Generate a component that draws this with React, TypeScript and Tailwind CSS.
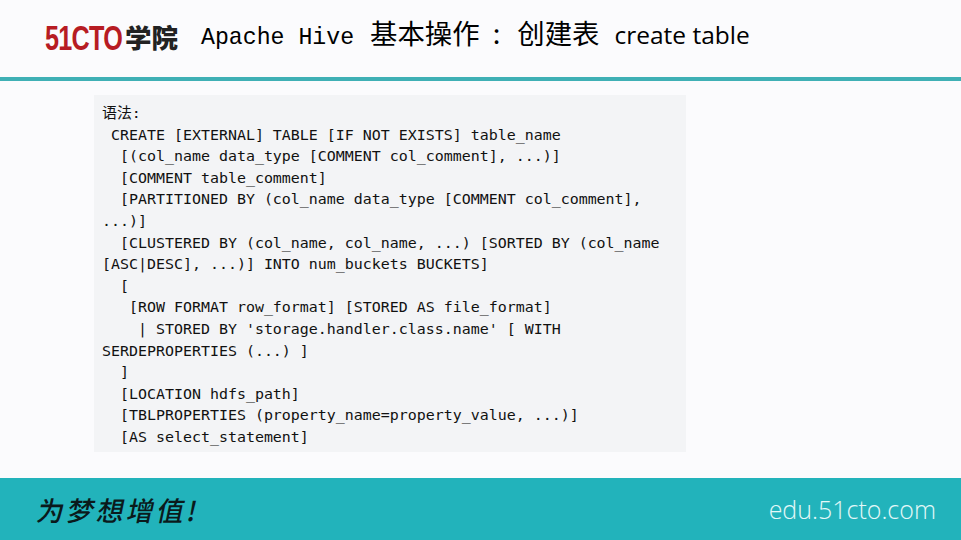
const SQL_LINES = [
  "语法:",
  " CREATE [EXTERNAL] TABLE [IF NOT EXISTS] table_name",
  "  [(col_name data_type [COMMENT col_comment], ...)]",
  "  [COMMENT table_comment]",
  "  [PARTITIONED BY (col_name data_type [COMMENT col_comment],",
  "...)]",
  "  [CLUSTERED BY (col_name, col_name, ...) [SORTED BY (col_name",
  "[ASC|DESC], ...)] INTO num_buckets BUCKETS]",
  "  [",
  "   [ROW FORMAT row_format] [STORED AS file_format]",
  "    | STORED BY 'storage.handler.class.name' [ WITH",
  "SERDEPROPERTIES (...) ]",
  "  ]",
  "  [LOCATION hdfs_path]",
  "  [TBLPROPERTIES (property_name=property_value, ...)]",
  "  [AS select_statement]",
];

export default function App() {
  return (
    <div className="flex h-[540px] w-[961px] flex-col overflow-hidden bg-[#fbfbfd]">
      {/* Header */}
      <header className="flex h-[81px] shrink-0 items-center border-b-4 border-[#3fb0b5] pb-0.5 pl-[45px]">
        <div className="flex w-[156px] items-center font-bold">
          <span className="inline-block w-[80px] origin-left scale-x-[0.72] font-['Liberation_Sans',sans-serif] text-[35px] leading-none tracking-[-1px] text-[#b71c23]">
            51CTO
          </span>
          <span className="font-['Noto_Sans_CJK_SC',sans-serif] text-[26.5px] font-black leading-none text-[#222]">学院</span>
        </div>
        <h1 className="flex items-baseline whitespace-pre text-black">
          <span className="font-['Liberation_Mono',monospace] text-[23.2px]">Apache Hive</span>
          <span className="ml-4 font-['Noto_Sans_CJK_SC',sans-serif] text-[27.4px] leading-none">基本操作</span>
          <span className="ml-[13px] font-['Noto_Sans_CJK_SC',sans-serif] text-[27.4px] leading-none">:</span>
          <span className="ml-[17px] font-['Noto_Sans_CJK_SC',sans-serif] text-[27.4px] leading-none">创建表</span>
          <span className="ml-[15px] font-['Open_Sans',sans-serif] text-[24.5px] leading-none">create table</span>
        </h1>
      </header>

      {/* SQL syntax block */}
      <main className="flex-1 pl-[94px] pt-3.5">
        <div className="h-[357px] w-[592px] bg-[#f3f4f6] pl-2 pt-2">
          <pre className="font-['DejaVu_Sans_Mono','Noto_Sans_CJK_SC',monospace] text-[14.95px] leading-[21.6px] text-[#111]">
            {SQL_LINES.map((line) => (
              <div key={line}>{line}</div>
            ))}
          </pre>
        </div>
      </main>

      {/* Footer */}
      <footer className="flex h-[62px] shrink-0 items-center justify-between bg-[#22b3bb] pl-[38px] pr-[25px]">
        <span className="-skew-x-12 font-['Noto_Sans_CJK_SC',sans-serif] text-[27px] font-medium leading-none tracking-[3px] text-[#0a1a1c]">
          为梦想增值!
        </span>
        <span className="pt-0.5 font-['Open_Sans',sans-serif] text-[25px] font-light text-[#e3f8f8]">edu.51cto.com</span>
      </footer>
    </div>
  );
}
